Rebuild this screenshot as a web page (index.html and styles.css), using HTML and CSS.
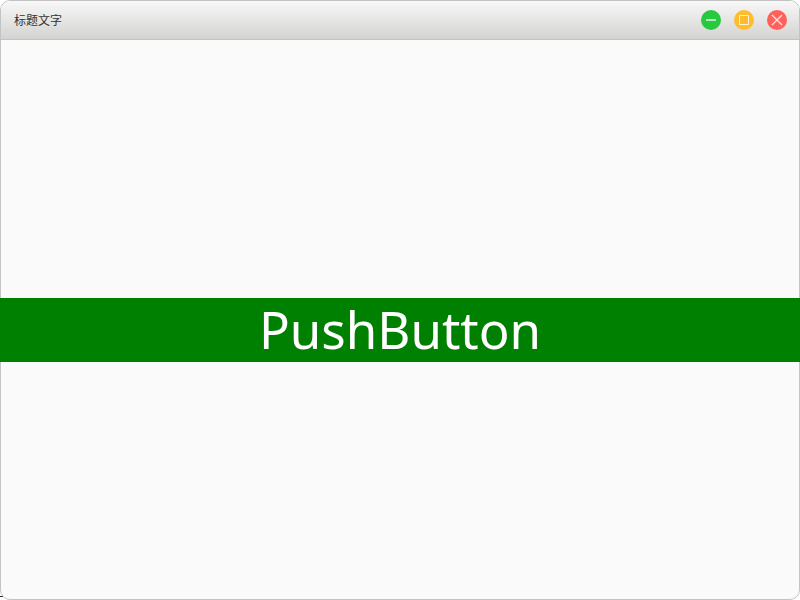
FILE: index.html
```html
<!DOCTYPE html>
<html lang="zh-CN">
<head>
  <meta charset="utf-8">
  <meta name="viewport" content="width=device-width, initial-scale=1">
  <title>标题文字</title>
  <link rel="stylesheet" href="styles.css">
</head>
<body>
  <div class="window">
    <header class="titlebar">
      <h1 class="title">标题文字</h1>
      <div class="controls">
        <button class="control minimize" type="button" aria-label="最小化">
          <svg viewBox="0 0 20 20" aria-hidden="true"><path d="M5 10H15"/></svg>
        </button>
        <button class="control maximize" type="button" aria-label="最大化">
          <svg viewBox="0 0 20 20" aria-hidden="true"><path d="M5.5 5.5H14.5V14.5H5.5Z"/></svg>
        </button>
        <button class="control close" type="button" aria-label="关闭">
          <svg viewBox="0 0 20 20" aria-hidden="true"><path d="M5 5L15 15M15 5L5 15"/></svg>
        </button>
      </div>
    </header>
    <main class="content">
      <button class="push-button" type="button">PushButton</button>
    </main>
  </div>
</body>
</html>
```
FILE: styles.css
```css
* {
  box-sizing: border-box;
}

body {
  margin: 0;
  background: #ffffff;
  font-family: "Noto Sans", "Noto Sans CJK SC", sans-serif;
}

/* Dark sliver of the desktop behind the rounded corner */
body::before {
  content: "";
  position: absolute;
  left: 0;
  bottom: 3px;
  width: 3px;
  height: 1px;
  background: #222222;
}

.window {
  position: relative;
  display: flex;
  flex-direction: column;
  min-height: 100vh;
  border: 1px solid #c3c3c3;
  border-radius: 10px;
  background: #fafafa;
}

.titlebar {
  display: flex;
  align-items: center;
  justify-content: space-between;
  height: 39px;
  padding: 0 12px 0 13px;
  border-bottom: 1px solid #c3c3c3;
  border-radius: 9px 9px 0 0;
  background: linear-gradient(#f8f8f8, #d3d3d2);
}

.title {
  margin: 0;
  font-family: "Noto Sans CJK SC", sans-serif;
  font-size: 12px;
  font-weight: 400;
  line-height: 16px;
  color: #333333;
}

.controls {
  display: flex;
  gap: 13px;
}

.control {
  width: 20px;
  height: 20px;
  padding: 0;
  border: 0;
  border-radius: 50%;
}

.control svg {
  display: block;
  width: 20px;
  height: 20px;
  fill: none;
  stroke: #ffffff;
  stroke-opacity: 0.8;
  stroke-width: 1;
}

.minimize {
  background: #28c940;
}

.minimize svg {
  stroke-width: 1.6;
}

.maximize {
  background: #ffbd2e;
}

.close {
  background: #ff6059;
}

.close svg {
  stroke-width: 1.4;
}

.content {
  display: flex;
  flex: 1;
  align-items: center;
  padding-top: 21px;
}

.push-button {
  flex: 1;
  height: 64px;
  margin: 0 -1px;
  padding: 0 0 2px;
  border: 0;
  background: #008000;
  color: #ffffff;
  font-family: "Noto Sans", sans-serif;
  font-size: 51px;
  line-height: 62px;
}
```
